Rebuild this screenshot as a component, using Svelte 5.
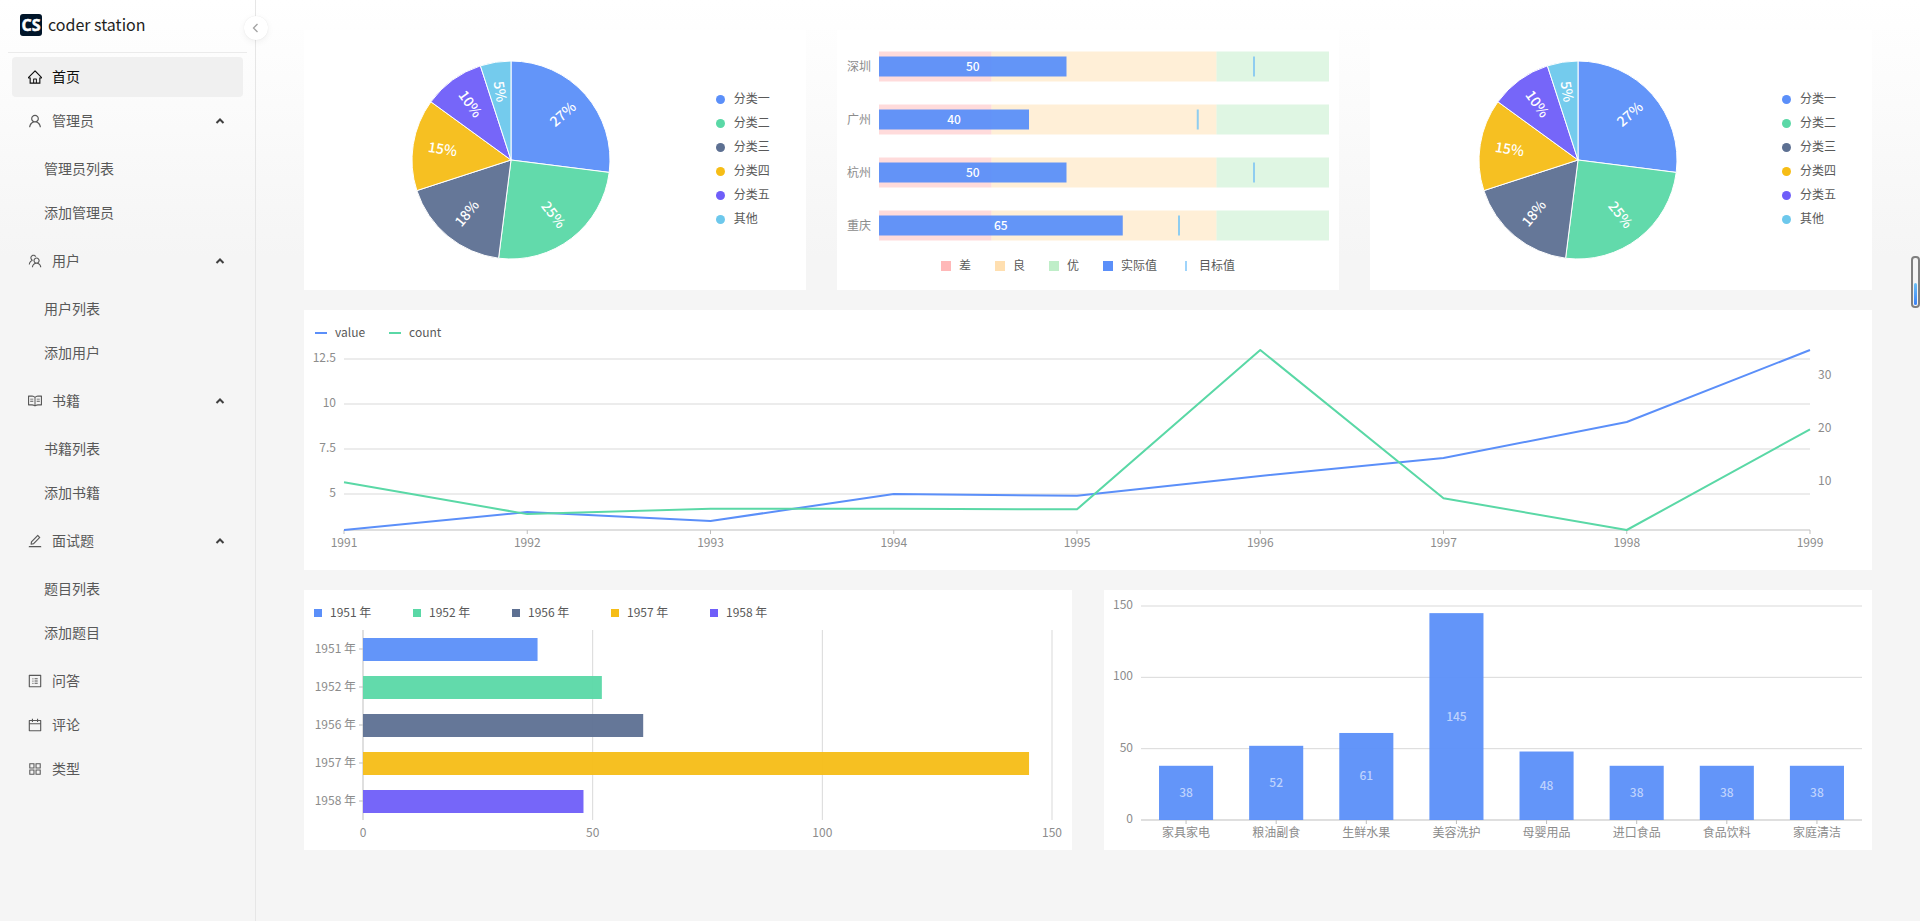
<script lang="ts">
    interface MenuItem {
        key: string;
        label: string;
        icon: string;
        children?: string[];
    }

    const icons: Record<string, string> = {
        home: 'M946.5 505L560.1 118.8l-25.9-25.9a31.5 31.5 0 00-44.4 0L77.5 505a63.9 63.9 0 00-18.8 46c.4 35.2 29.7 63.3 64.9 63.3h42.5V940h691.8V614.3h43.4c17.1 0 33.2-6.7 45.3-18.8a63.6 63.6 0 0018.7-45.3c0-17-6.7-33.1-18.8-45.2zM568 868H456V664h112v204zm217.9-325.7V868H632V640c0-22.1-17.9-40-40-40H432c-22.1 0-40 17.9-40 40v228H238.1V542.3h-96l370-369.7 23.1 23.1L882 542.3h-96.1z',
        user: 'M858.5 763.6a374 374 0 00-80.6-119.5 375.63 375.63 0 00-119.5-80.6c-.4-.2-.8-.3-1.2-.5C719.5 518 760 444.7 760 362c0-137-111-248-248-248S264 225 264 362c0 82.7 40.5 156 102.8 201.1-.4.2-.8.3-1.2.5-44.8 18.9-85 46-119.5 80.6a375.63 375.63 0 00-80.6 119.5A371.7 371.7 0 00136 901.8a8 8 0 008 8.2h60c4.4 0 7.9-3.5 8-7.8 2-77.2 33-149.5 87.8-204.3 56.7-56.7 132-87.9 212.2-87.9s155.5 31.2 212.2 87.9C779 752.7 810 825 812 902.2c.1 4.4 3.6 7.8 8 7.8h60a8 8 0 008-8.2c-1-47.8-10.9-94.3-29.5-138.2zM512 534c-45.9 0-89.1-17.9-121.6-50.4S340 407.9 340 362c0-45.9 17.9-89.1 50.4-121.6S466.1 190 512 190s89.1 17.9 121.6 50.4S684 316.1 684 362c0 45.9-17.9 89.1-50.4 121.6S557.9 534 512 534z',
        team: 'M824.2 699.9a301.55 301.55 0 00-86.4-60.4C783.1 602.8 812 546.8 812 484c0-110.8-92.4-201.7-203.2-200-109.1 1.7-197 90.6-197 200 0 62.8 29 118.8 74.2 155.5a300.95 300.95 0 00-86.4 60.4C345 754.6 314 826.8 312 903.8a8 8 0 008 8.2h56c4.3 0 7.9-3.4 8-7.7 1.9-58 25.4-112.3 66.7-153.5A226.62 226.62 0 01612 684c60.9 0 118.2 23.7 161.3 66.8C814.6 792 838 846.3 840 904.3c.1 4.3 3.7 7.7 8 7.7h56a8 8 0 008-8.2c-2-77-33-149.2-87.8-203.9zM612 612c-34.2 0-66.4-13.3-90.5-37.5a126.86 126.86 0 01-37.5-91.8c.3-32.8 13.4-64.5 36.3-88 24-24.6 56.1-38.3 90.4-38.7 33.9-.3 66.8 12.9 91 36.6 24.8 24.3 38.4 56.8 38.4 91.4 0 34.2-13.3 66.3-37.5 90.5A127.3 127.3 0 01612 612zM361.5 510.4c-.9-8.7-1.4-17.5-1.4-26.4 0-15.9 1.5-31.4 4.3-46.5.7-3.6-1.2-7.3-4.5-8.8-13.6-6.1-26.1-14.5-36.9-25.1a127.54 127.54 0 01-38.7-95.4c.9-32.1 13.8-62.6 36.3-85.6 24.7-25.3 57.9-39.1 93.2-38.7 31.9.3 62.7 12.6 86 34.4 7.9 7.4 14.7 15.6 20.4 24.4 2 3.1 5.9 4.4 9.3 3.2 17.6-6.1 36.2-10.4 55.3-12.4 5.6-.6 8.8-6.6 6.3-11.6-32.5-64.3-98.9-108.7-175.7-109.9-110.9-1.7-203.3 89.2-203.3 199.9 0 62.8 28.9 118.8 74.2 155.5-31.8 14.7-61.1 35-86.5 60.4-54.8 54.7-85.8 126.9-87.8 204a8 8 0 008 8.2h56.1c4.3 0 7.9-3.4 8-7.7 1.9-58 25.4-112.3 66.7-153.5 29.4-29.4 65.4-49.8 104.7-59.7 3.9-1 6.5-4.7 6-8.7z',
        read: 'M928 161H699.2c-49.1 0-97.1 14.1-138.4 40.7L512 233l-48.8-31.3A255.2 255.2 0 00324.8 161H96c-17.7 0-32 14.3-32 32v568c0 17.7 14.3 32 32 32h228.8c49.1 0 97.1 14.1 138.4 40.7l44.4 28.6c1.3.8 2.8 1.3 4.3 1.3s3-.4 4.3-1.3l44.4-28.6C602 807.1 650.1 793 699.2 793H928c17.7 0 32-14.3 32-32V193c0-17.7-14.3-32-32-32zM324.8 721H136V233h188.8c35.4 0 69.8 10.1 99.5 29.2l48.8 31.3 6.9 4.5v462c-47.6-25.6-100.8-39-155.2-39zm563.2 0H699.2c-54.4 0-107.6 13.4-155.2 39V298l6.9-4.5 48.8-31.3c29.7-19.1 64.1-29.2 99.5-29.2H888v488zM396.9 361H211.1c-3.9 0-7.1 3.4-7.1 7.5v45c0 4.1 3.2 7.5 7.1 7.5h185.7c3.9 0 7.1-3.4 7.1-7.5v-45c.1-4.1-3.1-7.5-7-7.5zm223.1 7.5v45c0 4.1 3.2 7.5 7.1 7.5h185.7c3.9 0 7.1-3.4 7.1-7.5v-45c0-4.1-3.2-7.5-7.1-7.5H627.1c-3.9 0-7.1 3.4-7.1 7.5zM396.9 501H211.1c-3.9 0-7.1 3.4-7.1 7.5v45c0 4.1 3.2 7.5 7.1 7.5h185.7c3.9 0 7.1-3.4 7.1-7.5v-45c.1-4.1-3.1-7.5-7-7.5zm416 0H627.1c-3.9 0-7.1 3.4-7.1 7.5v45c0 4.1 3.2 7.5 7.1 7.5h185.7c3.9 0 7.1-3.4 7.1-7.5v-45c.1-4.1-3.1-7.5-7-7.5z',
        edit: 'M257.7 752c2 0 4-.2 6-.5L431.9 722c2-.4 3.9-1.3 5.3-2.8l423.9-423.9a9.96 9.96 0 000-14.1L694.9 114.9c-1.9-1.9-4.4-2.9-7.1-2.9s-5.2 1-7.1 2.9L256.8 538.8c-1.5 1.5-2.4 3.3-2.8 5.3l-29.5 168.2a33.5 33.5 0 009.4 29.8c6.6 6.4 14.9 9.9 23.8 9.9zm67.4-174.4L687.8 215l73.3 73.3-362.7 362.6-88.9 15.7 15.6-89zM880 836H144c-17.7 0-32 14.3-32 32v36c0 4.4 3.6 8 8 8h784c4.4 0 8-3.6 8-8v-36c0-17.7-14.3-32-32-32z',
        profile: 'M880 112H144c-17.7 0-32 14.3-32 32v736c0 17.7 14.3 32 32 32h736c17.7 0 32-14.3 32-32V144c0-17.7-14.3-32-32-32zm-40 728H184V184h656v656zM492 400h184c4.4 0 8-3.6 8-8v-48c0-4.4-3.6-8-8-8H492c-4.4 0-8 3.6-8 8v48c0 4.4 3.6 8 8 8zm0 144h184c4.4 0 8-3.6 8-8v-48c0-4.4-3.6-8-8-8H492c-4.4 0-8 3.6-8 8v48c0 4.4 3.6 8 8 8zm0 144h184c4.4 0 8-3.6 8-8v-48c0-4.4-3.6-8-8-8H492c-4.4 0-8 3.6-8 8v48c0 4.4 3.6 8 8 8zM340 368a40 40 0 1080 0 40 40 0 10-80 0zm0 144a40 40 0 1080 0 40 40 0 10-80 0zm0 144a40 40 0 1080 0 40 40 0 10-80 0z',
        calendar: 'M880 184H712v-64c0-4.4-3.6-8-8-8h-56c-4.4 0-8 3.6-8 8v64H384v-64c0-4.4-3.6-8-8-8h-56c-4.4 0-8 3.6-8 8v64H144c-17.7 0-32 14.3-32 32v664c0 17.7 14.3 32 32 32h736c17.7 0 32-14.3 32-32V216c0-17.7-14.3-32-32-32zm-40 656H184V460h656v380zM184 392V256h128v48c0 4.4 3.6 8 8 8h56c4.4 0 8-3.6 8-8v-48h256v48c0 4.4 3.6 8 8 8h56c4.4 0 8-3.6 8-8v-48h128v136H184z',
        appstore: 'M464 144H160c-8.8 0-16 7.2-16 16v304c0 8.8 7.2 16 16 16h304c8.8 0 16-7.2 16-16V160c0-8.8-7.2-16-16-16zm-52 268H212V212h200v200zm452-268H560c-8.8 0-16 7.2-16 16v304c0 8.8 7.2 16 16 16h304c8.8 0 16-7.2 16-16V160c0-8.8-7.2-16-16-16zm-52 268H612V212h200v200zM464 544H160c-8.8 0-16 7.2-16 16v304c0 8.8 7.2 16 16 16h304c8.8 0 16-7.2 16-16V560c0-8.8-7.2-16-16-16zm-52 268H212V612h200v200zm452-268H560c-8.8 0-16 7.2-16 16v304c0 8.8 7.2 16 16 16h304c8.8 0 16-7.2 16-16V560c0-8.8-7.2-16-16-16zm-52 268H612V612h200v200z',
    };

    const menu: MenuItem[] = [
        { key: 'home', label: '首页', icon: 'home' },
        { key: 'admin', label: '管理员', icon: 'user', children: ['管理员列表', '添加管理员'] },
        { key: 'user', label: '用户', icon: 'team', children: ['用户列表', '添加用户'] },
        { key: 'book', label: '书籍', icon: 'read', children: ['书籍列表', '添加书籍'] },
        { key: 'interview', label: '面试题', icon: 'edit', children: ['题目列表', '添加题目'] },
        { key: 'issue', label: '问答', icon: 'profile' },
        { key: 'comment', label: '评论', icon: 'calendar' },
        { key: 'type', label: '类型', icon: 'appstore' },
    ];

    let closed = $state<Record<string, boolean>>({});

    const colors = ['#5b8ff9', '#5ad8a6', '#5d7092', '#f6bd16', '#6f5ef9', '#6dc8ec'];

    // pie
    const pieData = [
        { type: '分类一', value: 27 },
        { type: '分类二', value: 25 },
        { type: '分类三', value: 18 },
        { type: '分类四', value: 15 },
        { type: '分类五', value: 10 },
        { type: '其他', value: 5 },
    ];
    const R = 99;
    const C = 100;

    function point(percent: number, r: number) {
        const a = (percent / 100) * Math.PI * 2;
        return { x: C + Math.sin(a) * r, y: C - Math.cos(a) * r };
    }

    let sum = 0;
    const slices = pieData.map((d, i) => {
        const from = point(sum, R);
        const to = point(sum + d.value, R);
        const mid = sum + d.value / 2;
        const deg = mid * 3.6 - 90;
        sum += d.value;
        return {
            ...d,
            color: colors[i],
            path: `M${C} ${C}L${from.x} ${from.y}A${R} ${R} 0 0 1 ${to.x} ${to.y}Z`,
            label: point(mid, R * 0.7),
            rotate: deg > 90 ? deg - 180 : deg,
        };
    });

    // bullet
    const bulletData = [
        { title: '深圳', measure: 50, target: 100 },
        { title: '广州', measure: 40, target: 85 },
        { title: '杭州', measure: 50, target: 100 },
        { title: '重庆', measure: 65, target: 80 },
    ];
    const ranges = [
        { label: '差', from: 0, to: 30, color: '#ffb8b8' },
        { label: '良', from: 30, to: 90, color: '#ffdfb0' },
        { label: '优', from: 90, to: 120, color: '#bfeec8' },
    ];
    let bulletWidth = $state(502);
    const bx = $derived((v: number) => 42 + (v / 120) * (bulletWidth - 52));

    // dual lines
    const lineData = [
        { year: '1991', value: 3, count: 10 },
        { year: '1992', value: 4, count: 4 },
        { year: '1993', value: 3.5, count: 5 },
        { year: '1994', value: 5, count: 5 },
        { year: '1995', value: 4.9, count: 4.9 },
        { year: '1996', value: 6, count: 35 },
        { year: '1997', value: 7, count: 7 },
        { year: '1998', value: 9, count: 1 },
        { year: '1999', value: 13, count: 20 },
    ];
    let lineWidth = $state(1568);
    const lx = $derived((i: number) => 40 + (i / (lineData.length - 1)) * (lineWidth - 102));
    const valueY = (v: number) => 188 - (v - 3) * 18;
    const countY = (v: number) => 188 - ((v - 1) / 34) * 180;
    const valuePoints = $derived(lineData.map((d, i) => `${lx(i)},${valueY(d.value)}`).join(' '));
    const countPoints = $derived(lineData.map((d, i) => `${lx(i)},${countY(d.count)}`).join(' '));

    // bars
    const barData = [
        { year: '1951 年', value: 38 },
        { year: '1952 年', value: 52 },
        { year: '1956 年', value: 61 },
        { year: '1957 年', value: 145 },
        { year: '1958 年', value: 48 },
    ];
    let barWidth = $state(768);
    const hx = $derived((v: number) => 59 + (v / 150) * (barWidth - 79));

    // columns
    const columnData = [
        { type: '家具家电', sales: 38 },
        { type: '粮油副食', sales: 52 },
        { type: '生鲜水果', sales: 61 },
        { type: '美容洗护', sales: 145 },
        { type: '母婴用品', sales: 48 },
        { type: '进口食品', sales: 38 },
        { type: '食品饮料', sales: 38 },
        { type: '家庭清洁', sales: 38 },
    ];
    let columnWidth = $state(768);
    const band = $derived((columnWidth - 47) / columnData.length);
    const columnY = (v: number) => 230 - (v / 150) * 214;
</script>

{#snippet icon(name: string)}
    <svg class="icon" viewBox="64 64 896 896" aria-hidden="true"><path d={icons[name]} /></svg>
{/snippet}

{#snippet pie()}
    <section class="card pie">
        <div class="pie-plot">
            <svg width="200" height="200" role="img" aria-label="分类占比">
                {#each slices as s}
                    <path d={s.path} fill={s.color} fill-opacity="0.95" stroke="#fff" />
                {/each}
                {#each slices as s}
                    <text
                        class="pie-label"
                        x={s.label.x}
                        y={s.label.y}
                        dy="5"
                        transform={`rotate(${s.rotate} ${s.label.x} ${s.label.y})`}
                    >{s.value}%</text>
                {/each}
            </svg>
        </div>
        <ul class="pie-legend">
            {#each slices as s}
                <li><i class="dot" style:background={s.color}></i>{s.type}</li>
            {/each}
        </ul>
    </section>
{/snippet}

<div class="layout">
    <aside>
        <a class="brand" href="#home">
            <svg class="logo" viewBox="0 0 22 22" aria-hidden="true">
                <rect width="22" height="22" rx="3" fill="#001529" />
                <text x="11" y="17">CS</text>
            </svg>
            <span>coder station</span>
        </a>
        <button class="collapse" aria-label="收起菜单">
            <svg viewBox="0 0 12 12" aria-hidden="true"><path d="M7.5 2L3.5 6l4 4" /></svg>
        </button>
        <nav>
            {#each menu as item}
                {#if item.children}
                    <button
                        class="item"
                        aria-expanded={!closed[item.key]}
                        onclick={() => (closed[item.key] = !closed[item.key])}
                    >
                        {@render icon(item.icon)}
                        <span>{item.label}</span>
                        <svg class="arrow" class:down={closed[item.key]} viewBox="0 0 10 8" aria-hidden="true">
                            <path d="M1.5 6L5 2.5 8.5 6" />
                        </svg>
                    </button>
                    {#if !closed[item.key]}
                        <div class="sub">
                            {#each item.children as child}
                                <a class="item" href={`#${item.key}`}><span>{child}</span></a>
                            {/each}
                        </div>
                    {/if}
                {:else}
                    <a class="item" class:active={item.key === 'home'} href={`#${item.key}`}>
                        {@render icon(item.icon)}
                        <span>{item.label}</span>
                    </a>
                {/if}
            {/each}
        </nav>
    </aside>

    <main>
        <div class="row thirds">
            {@render pie()}

            <section class="card" bind:clientWidth={bulletWidth}>
                <svg width={bulletWidth} height="226" role="img" aria-label="城市指标">
                    {#each bulletData as d, i}
                        {@const mid = 36.5 + i * 53}
                        {#each ranges as r}
                            <rect
                                x={bx(r.from)}
                                y={mid - 15}
                                width={bx(r.to) - bx(r.from)}
                                height="30"
                                fill={r.color}
                                fill-opacity="0.5"
                            />
                        {/each}
                        <rect
                            x={bx(0)}
                            y={mid - 10}
                            width={bx(d.measure) - bx(0)}
                            height="20"
                            fill="#5b8ff9"
                            fill-opacity="0.95"
                        />
                        <rect x={bx(d.target) - 1} y={mid - 10} width="2" height="20" fill="#8fcdf0" />
                        <text class="end" x="34" y={mid} dy="4">{d.title}</text>
                        <text class="middle white" x={bx(d.measure / 2)} y={mid} dy="4">{d.measure}</text>
                    {/each}
                </svg>
                <ul class="legend bullet-legend">
                    {#each ranges as r}
                        <li><i class="square" style:background={r.color}></i>{r.label}</li>
                    {/each}
                    <li><i class="square" style:background="#5b8ff9"></i>实际值</li>
                    <li><i class="tick"></i>目标值</li>
                </ul>
            </section>

            {@render pie()}
        </div>

        <section class="card" bind:clientWidth={lineWidth}>
            <ul class="legend line-legend">
                <li><i class="line" style:background={colors[0]}></i>value</li>
                <li><i class="line" style:background={colors[1]}></i>count</li>
            </ul>
            <svg width={lineWidth} height="228" role="img" aria-label="value / count">
                {#each [12.5, 10, 7.5, 5] as v}
                    <line class="grid" x1={lx(0)} x2={lx(8)} y1={valueY(v)} y2={valueY(v)} />
                    <text class="end" x="32" y={valueY(v)} dy="3">{v}</text>
                {/each}
                {#each [30, 20, 10] as v}
                    <text x={lx(8) + 8} y={countY(v)} dy="3">{v}</text>
                {/each}
                <line class="axis" x1={lx(0)} x2={lx(8)} y1="188" y2="188" />
                {#each lineData as d, i}
                    <line class="axis" x1={lx(i)} x2={lx(i)} y1="188" y2="192" />
                    <text class="middle" x={lx(i)} y="205">{d.year}</text>
                {/each}
                <polyline points={valuePoints} stroke={colors[0]} />
                <polyline points={countPoints} stroke={colors[1]} />
            </svg>
        </section>

        <div class="row halves">
            <section class="card" bind:clientWidth={barWidth}>
                <ul class="legend bar-legend">
                    {#each barData as d, i}
                        <li><i class="small" style:background={colors[i]}></i>{d.year}</li>
                    {/each}
                </ul>
                <svg width={barWidth} height="228" role="img" aria-label="年份数据">
                    {#each [0, 50, 100, 150] as v}
                        <line class={v ? 'grid' : 'axis'} x1={hx(v)} x2={hx(v)} y1="8" y2="198" />
                        <text class="middle" x={hx(v)} y="215">{v}</text>
                    {/each}
                    {#each barData as d, i}
                        {@const mid = 27 + i * 38}
                        <line class="axis" x1="55" x2="59" y1={mid} y2={mid} />
                        <text class="end" x="52" y={mid} dy="4">{d.year}</text>
                        <rect
                            x={hx(0)}
                            y={mid - 11}
                            width={hx(d.value) - hx(0)}
                            height="23"
                            fill={colors[i]}
                            fill-opacity="0.95"
                        />
                    {/each}
                </svg>
            </section>

            <section class="card" bind:clientWidth={columnWidth}>
                <svg width={columnWidth} height="260" role="img" aria-label="品类销售">
                    {#each [150, 100, 50, 0] as v}
                        <line class={v ? 'grid' : 'axis'} x1="37" x2={columnWidth - 10} y1={columnY(v)} y2={columnY(v)} />
                        <text class="end" x="29" y={columnY(v)} dy="3">{v}</text>
                    {/each}
                    {#each columnData as d, i}
                        {@const mid = 37 + band * (i + 0.5)}
                        <line class="axis" x1={mid} x2={mid} y1="230" y2="234" />
                        <rect
                            x={mid - band * 0.3}
                            y={columnY(d.sales)}
                            width={band * 0.6}
                            height={230 - columnY(d.sales)}
                            fill="#5b8ff9"
                            fill-opacity="0.95"
                        />
                        <text class="middle faded" x={mid} y={columnY(d.sales / 2)} dy="4">{d.sales}</text>
                        <text class="middle" x={mid} y="247">{d.type}</text>
                    {/each}
                </svg>
            </section>
        </div>
    </main>

    <div class="gauge" aria-hidden="true"><i></i></div>
</div>

<style>
    :global(body) { margin: 0; }
    .layout {
        display: flex;
        min-height: 100vh;
        background: linear-gradient(#ffffff, #f5f5f5 28%);
        font-family: "Noto Sans CJK SC", "Noto Sans", sans-serif;
        font-size: 14px;
    }

    aside {
        position: relative;
        flex: none;
        box-sizing: border-box;
        width: 256px;
        padding: 0 8px;
        border-right: 1px solid #e6e6e6;
    }
    .brand {
        display: flex;
        align-items: center;
        gap: 6px;
        height: 53px;
        box-sizing: border-box;
        padding: 0 12px 2px;
        border-bottom: 1px solid #ebebeb;
        color: #1f1f1f;
        font-size: 16px;
        text-decoration: none;
    }
    .brand span { padding-bottom: 2px; }
    .logo { width: 22px; height: 22px; }
    .logo text {
        fill: #fff;
        stroke: #fff;
        stroke-width: 0.5;
        font: 700 16px "Open Sans", "Noto Sans", sans-serif;
        text-anchor: middle;
    }
    .collapse {
        position: absolute;
        top: 16px;
        right: -13px;
        display: grid;
        place-items: center;
        width: 24px;
        height: 24px;
        padding: 0;
        border: 0;
        border-radius: 50%;
        background: #fff;
        box-shadow: 0 2px 8px -2px rgba(0, 0, 0, 0.1), 0 0 1px rgba(0, 0, 0, 0.1);
        cursor: pointer;
    }
    .collapse svg { width: 12px; height: 12px; fill: none; stroke: #a3a3a3; stroke-width: 1.3; }

    nav { padding: 4px; }
    .item {
        display: flex;
        align-items: center;
        gap: 10px;
        box-sizing: border-box;
        width: 100%;
        height: 40px;
        margin-bottom: 4px;
        padding: 0 18px 0 16px;
        border: 0;
        border-radius: 4px;
        background: none;
        color: #595959;
        font: inherit;
        text-align: left;
        text-decoration: none;
        cursor: pointer;
    }
    .item span { flex: 1; padding-bottom: 2px; }
    .item.active { background: #f0f0f0; color: #0d0d0d; }
    .icon { width: 14px; height: 14px; fill: currentColor; }
    .arrow { width: 10px; height: 8px; fill: none; stroke: #404040; stroke-width: 2; }
    .arrow.down { transform: rotate(180deg); }
    .sub { padding: 4px 0; }
    .sub .item { padding-left: 32px; }

    main {
        display: flex;
        flex: 1;
        flex-direction: column;
        gap: 20px;
        min-width: 0;
        padding: 30px 48px;
    }
    .row { display: grid; justify-content: space-between; }
    .thirds { grid-template-columns: repeat(3, 32%); }
    .halves { grid-template-columns: repeat(2, 49%); }
    .card {
        min-width: 0;
        min-height: 260px;
        overflow: hidden;
        background: #fff;
    }
    .card svg { display: block; }

    ul { margin: 0; padding: 0; list-style: none; }
    li { display: flex; align-items: center; color: #595959; font-size: 12px; line-height: 18px; }

    .pie { display: flex; padding-left: 3px; }
    .pie-plot { display: flex; flex: 1; align-items: center; justify-content: center; }
    .pie-legend { display: flex; flex: none; flex-direction: column; gap: 6px; width: 90px; padding-top: 59px; }
    .pie-legend li { gap: 9px; }
    .dot { width: 9px; height: 9px; margin-top: 2px; border-radius: 50%; }

    .legend { display: flex; }
    .legend li { gap: 8px; }
    .legend i { margin-top: 2px; }
    .bullet-legend { justify-content: center; gap: 24px; }
    .square { width: 10px; height: 10px; }
    .legend .tick { width: 2px; height: 10px; margin: 2px 4px 0; background: #9fd4fb; }
    .line-legend { gap: 24px; padding: 13px 10px 1px 11px; }
    .line { width: 12px; height: 2px; }
    .bar-legend { padding: 13px 10px 1px; }
    .bar-legend li { width: 99px; }
    .small { width: 8px; height: 8px; }

    text { fill: #8c8c8c; font-size: 12px; }
    .end { text-anchor: end; }
    .middle, .pie-label { text-anchor: middle; }
    .pie-label { fill: #fff; font-size: 14px; font-weight: 500; }
    .white { fill: #fff; font-weight: 500; }
    .faded { fill: #bed2fd; font-weight: 500; }
    .grid { stroke: #d9d9d9; }
    .axis { stroke: #bfbfbf; }
    polyline { fill: none; stroke-width: 2; stroke-linejoin: round; }

    .gauge {
        position: fixed;
        top: 256px;
        right: 0;
        display: flex;
        align-items: flex-end;
        box-sizing: border-box;
        width: 9px;
        height: 52px;
        padding: 1px;
        border: 2px solid #7f7f7f;
        border-radius: 4px;
        background: #f4f4f4;
    }
    .gauge i { width: 100%; height: 22px; border-radius: 2px; background: linear-gradient(#6cc0f5, #3b82f6); }
</style>
